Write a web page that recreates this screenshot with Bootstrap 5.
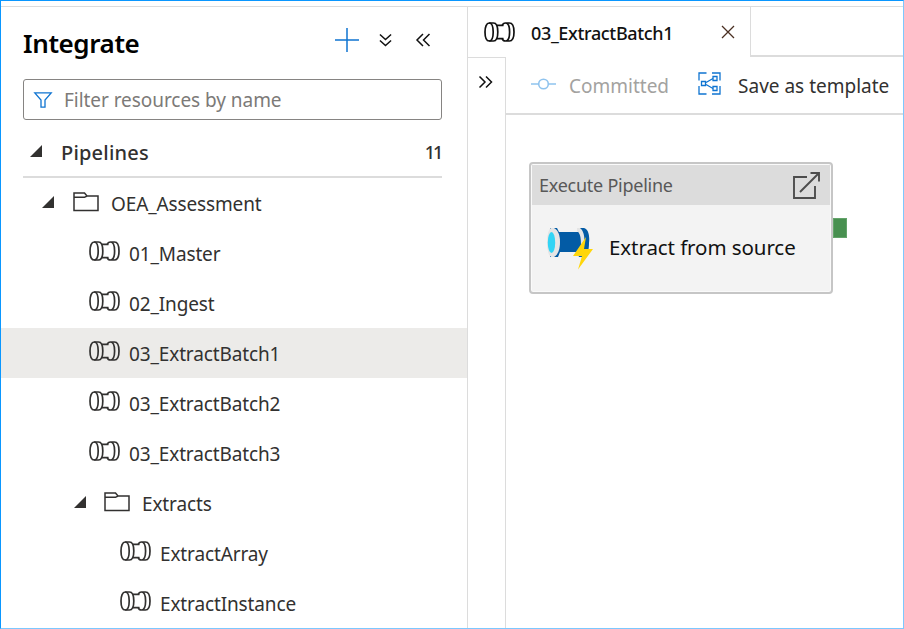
<!DOCTYPE html>
<html lang="en">
<head>
<meta charset="utf-8">
<meta name="viewport" content="width=device-width, initial-scale=1">
<title>Integrate</title>
<link href="https://cdn.jsdelivr.net/npm/bootstrap@5.3.0/dist/css/bootstrap.min.css" rel="stylesheet">
<style>
  body { font-family: "Noto Sans", "Open Sans", sans-serif; font-size: 19px; line-height: 26px; color: #323130; background: #fff; }
  svg { display: block; flex: none; overflow: visible; }
  .app-frame { height: 629px; padding-top: 5px; border: 1px solid #7cc8ff; border-top-color: #0a97ff; border-left-color: #0a97ff; }
  .shell { border-top: 1px solid #dcdcdc; }
  .side { width: 467px; flex: none; border-right: 1px solid #dcdcdc; }
  .side-head { height: 72px; padding: 0 37px 0 22px; }
  .side-head svg { margin-top: -6px; }
  .side-title { font-size: 26px; font-weight: 600; color: #000; line-height: 36px; letter-spacing: -.4px; }
  .plus-icon { margin-right: 20px; }
  .filter-box { height: 41px; margin: 0 25px 0 22px; padding: 0 10px; border: 1px solid #868482; border-radius: 3px; color: #7c7a78; letter-spacing: -.05px; }
  .section-head { height: 58px; margin: 0 25px 0 22px; padding: 10px 0 0 7px; border-bottom: 2px solid #dcdcdc; font-size: 20px; font-weight: 500; }
  .section-head svg { margin-top: -4px; }
  .section-text { margin-left: 19px; letter-spacing: .2px; }
  .count-text { font-size: 18px; letter-spacing: -2.2px; margin-right: 1px; margin-top: -2px; }
  .tree-row { height: 50px; padding-top: 2px; letter-spacing: -.13px; }
  .tree-row svg { margin-top: -5px; }
  .tree-row .pipe-icon { margin-top: -6px; }
  .row-selected { background: #ecebe9; }
  .lvl-1 { padding-left: 41px; }
  .lvl-2 { padding-left: 88px; }
  .lvl-2f { padding-left: 73px; }
  .lvl-3 { padding-left: 119px; }
  .leaf-text { margin-left: 9px; }
  .folder-icon { margin-left: 19px; }
  .lvl-2f .folder-icon { margin-left: 18px; }
  .folder-text { margin-left: 12px; }
  .doc-tab { width: 283px; height: 50px; padding: 0 16px 0 16px; border-right: 1px solid #dcdcdc; font-size: 18px; font-weight: 500; color: #111; }
  .doc-tab .pipe-icon { margin-top: -1px; }
  .tab-text { letter-spacing: -.35px; padding-top: 2px; }
  .tab-rest { height: 50px; border-bottom: 2px solid #dcdcdc; }
  .rail { width: 38px; flex: none; border: 1px solid #dcdcdc; border-width: 1px 1px 0 0; padding: 18px 0 0 11px; }
  .tool-bar { height: 58px; border-bottom: 2px solid #dcdcdc; padding: 2px 0 0 25px; white-space: nowrap; }
  .commit-icon { margin-top: -4px; }
  .muted-label { color: #a3a2a0; margin-left: 13px; }
  .tpl-icon { margin-left: 29px; margin-top: -6px; }
  .save-label { margin-left: 17px; }
  .design-canvas { position: relative; }
  .activity { position: absolute; left: 23px; top: 47px; width: 304px; height: 132px; border: 2px solid #c6c6c6; border-radius: 4px; background: #f3f3f3; color: #111; box-shadow: inset 0 0 0 1px #fafafa; padding: 1px; }
  .activity-head { height: 40px; background: #dcdcdc; color: #585858; font-size: 18px; padding: 0 10px 0 7px; }
  .kind-text { letter-spacing: -.25px; }
  .activity-body { height: 84px; padding: 0 0 0 15px; font-size: 20.5px; }
  .activity-body svg { margin-top: 2px; }
  .activity-text { margin-left: 15px; letter-spacing: -.08px; }
  .out-port { position: absolute; left: 327px; top: 103px; width: 14px; height: 20px; background: #489050; border: 1px solid #63a36a; }
</style>
</head>
<body>
<svg width="0" height="0" class="position-absolute" aria-hidden="true">
  <defs>
    <symbol id="pipe" viewBox="0 0 31 20">
      <g fill="none" stroke="currentColor" stroke-width="1.7">
        <path d="M5.200 1C2.500 1 1 5 1 10S2.500 19 5.200 19S9.200 15 9.200 10S7.900 1 5.200 1Z"/>
        <path d="M5.200 1H9.500C12.400 1 13.800 5 13.800 10S12.400 19 9.500 19H5.200"/>
        <path d="M12.600 3.300H19.500M12.600 16.700H19.500"/>
        <path d="M18.200 3.600C18.800 1.800 20 1 21.400 1H25.400C28.400 1 30 5 30 10S28.400 19 25.400 19H21.400C20 19 18.800 18.200 18.200 16.400M21.400 1C24 1 25.600 5 25.600 10S24 19 21.400 19"/>
      </g>
    </symbol>
    <symbol id="folder" viewBox="0 0 26 20">
      <path d="M1 18.500V1H11.500L14 4H25V18.500ZM1 5.300H11.500L14 4" fill="none" stroke="currentColor" stroke-width="1.5"/>
    </symbol>
    <symbol id="tri" viewBox="0 0 12 12"><path d="M12 0V12H0Z" fill="currentColor"/></symbol>
  </defs>
</svg>

<div class="app-frame d-flex flex-column overflow-hidden">
  <div class="shell d-flex flex-grow-1">
    <aside class="side">
      <div class="side-head d-flex align-items-center">
        <h1 class="side-title mb-0 me-auto">Integrate</h1>
        <svg class="plus-icon" width="24" height="24" viewBox="0 0 24 24"><path d="M12 0V24M0 12H24" stroke="#0f74d1" stroke-width="1.5"/></svg>
        <svg width="13" height="14" viewBox="0 0 14 14"><path d="M1 1L7 6.500L13 1M1 7.500L7 13L13 7.500" fill="none" stroke="#111" stroke-width="1.6"/></svg>
        <svg class="ms-4" width="14" height="14" viewBox="0 0 14 14"><path d="M7 1L1 7L7 13M13.500 1L7.500 7L13.500 13" fill="none" stroke="#111" stroke-width="1.5"/></svg>
      </div>
      <div class="filter-box d-flex align-items-center">
        <svg width="18" height="16" viewBox="0 0 18 16"><path d="M.8 .8H17.200L11 8V15.200H7V8Z" fill="none" stroke="#0f74d1" stroke-width="1.3"/></svg>
        <span class="filter-text ms-2 ps-1">Filter resources by name</span>
      </div>
      <div class="section-head d-flex align-items-center">
        <svg width="12" height="12"><use href="#tri"/></svg>
        <span class="section-text">Pipelines</span>
        <span class="count-text ms-auto">11</span>
      </div>
      <div class="tree-row lvl-1 d-flex align-items-center">
        <svg width="12" height="12"><use href="#tri"/></svg>
        <svg class="folder-icon" width="26" height="20"><use href="#folder"/></svg>
        <span class="folder-text">OEA_Assessment</span>
      </div>
      <div class="tree-row lvl-2 d-flex align-items-center"><svg class="pipe-icon" width="31" height="20"><use href="#pipe"/></svg><span class="leaf-text">01_Master</span></div>
      <div class="tree-row lvl-2 d-flex align-items-center"><svg class="pipe-icon" width="31" height="20"><use href="#pipe"/></svg><span class="leaf-text">02_Ingest</span></div>
      <div class="tree-row row-selected lvl-2 d-flex align-items-center"><svg class="pipe-icon" width="31" height="20"><use href="#pipe"/></svg><span class="leaf-text">03_ExtractBatch1</span></div>
      <div class="tree-row lvl-2 d-flex align-items-center"><svg class="pipe-icon" width="31" height="20"><use href="#pipe"/></svg><span class="leaf-text">03_ExtractBatch2</span></div>
      <div class="tree-row lvl-2 d-flex align-items-center"><svg class="pipe-icon" width="31" height="20"><use href="#pipe"/></svg><span class="leaf-text">03_ExtractBatch3</span></div>
      <div class="tree-row lvl-2f d-flex align-items-center">
        <svg width="12" height="12"><use href="#tri"/></svg>
        <svg class="folder-icon" width="26" height="20"><use href="#folder"/></svg>
        <span class="folder-text">Extracts</span>
      </div>
      <div class="tree-row lvl-3 d-flex align-items-center"><svg class="pipe-icon" width="31" height="20"><use href="#pipe"/></svg><span class="leaf-text">ExtractArray</span></div>
      <div class="tree-row lvl-3 d-flex align-items-center"><svg class="pipe-icon" width="31" height="20"><use href="#pipe"/></svg><span class="leaf-text">ExtractInstance</span></div>
    </aside>

    <main class="flex-grow-1 d-flex flex-column">
      <div class="d-flex">
        <div class="doc-tab d-flex align-items-center">
          <svg class="pipe-icon" width="31" height="20" color="#111"><use href="#pipe"/></svg>
          <span class="tab-text ms-3">03_ExtractBatch1</span>
          <svg class="ms-auto" width="12" height="12" viewBox="0 0 12 12"><path d="M0 0L12 12M12 0L0 12" stroke="#4a2f22" stroke-width="1.3"/></svg>
        </div>
        <div class="tab-rest flex-grow-1"></div>
      </div>
      <div class="d-flex flex-grow-1">
        <div class="rail"><svg width="13" height="12" viewBox="0 0 13 12"><path d="M.5 .5L6 6L.5 11.500M7 .5L12.500 6L7 11.500" fill="none" stroke="#111" stroke-width="1.5"/></svg></div>
        <div class="flex-grow-1 d-flex flex-column">
          <div class="tool-bar d-flex align-items-center">
            <svg class="commit-icon" width="25" height="12" viewBox="0 0 25 12"><path d="M0 6H7.500M17.500 6H25" stroke="#8fc3ee" stroke-width="1.6"/><circle cx="12.500" cy="6" r="4.800" fill="none" stroke="#8fc3ee" stroke-width="1.6"/></svg>
            <span class="muted-label">Committed</span>
            <svg class="tpl-icon" width="23" height="23" viewBox="0 0 23 23"><g fill="none" stroke="#0f74d1" stroke-width="1.3"><path d="M8.500 1H1V8.500M14 1H22V8.500M1 14V22H8.500M22 14V22H14M8 10.500L15 6.500M8 12.500L15 16.500"/><path d="M3.500 9.500H7.500V13.500H3.500ZM15 4.500H19V8.500H15ZM15 14.500H19V18.500H15Z"/></g></svg>
            <span class="save-label">Save as template</span>
          </div>
          <div class="design-canvas flex-grow-1">
            <div class="activity">
              <div class="activity-head d-flex align-items-center justify-content-between">
                <span class="kind-text">Execute Pipeline</span>
                <svg width="27" height="27" viewBox="0 0 27 27"><g fill="none" stroke="#4d4d4d" stroke-width="1.9"><path d="M14 5H1V26H22V14M7 20L25.500 1.500M17.500 1H26V9.500"/></g></svg>
              </div>
              <div class="activity-body d-flex align-items-center">
                <svg width="47" height="43" viewBox="0 0 47 43">
                  <path d="M3 1H10L12 5H31L33 1H37C41 2 43 8 42 16C42 24 40 29 37 30H32L30 25H13L11 30H3Z" fill="#035ba5"/>
                  <path d="M4 1H7C11 3 13 8 13 15S11 28 7 30H4Z" fill="#e5e5e5"/>
                  <ellipse cx="4.500" cy="15.500" rx="4.500" ry="14.500" fill="#e5e5e5"/>
                  <ellipse cx="4.500" cy="15.500" rx="3.700" ry="10.500" fill="#32d4f5"/>
                  <path d="M30 1H33C36 3 37.500 8 37.500 14L34 18C34 10 33 6 30 4Z" fill="#e5e5e5"/>
                  <path d="M39 10L26 29H35L31 42.500L46 22H37Z" fill="#ffd60a"/>
                </svg>
                <span class="activity-text">Extract from source</span>
              </div>
            </div>
            <div class="out-port"></div>
          </div>
        </div>
      </div>
    </main>
  </div>
</div>
<script src="https://cdn.jsdelivr.net/npm/bootstrap@5.3.0/dist/js/bootstrap.bundle.min.js"></script>
</body>
</html>
